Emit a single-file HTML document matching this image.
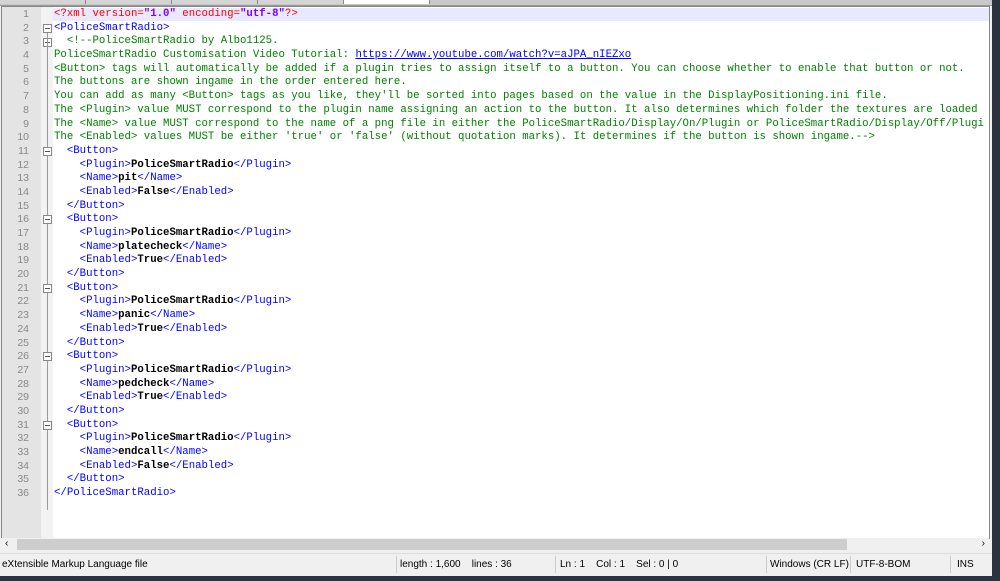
<!DOCTYPE html><html><head><style>
body{margin:0;width:1000px;height:581px;overflow:hidden;background:#2b3340;position:relative;font-family:"Liberation Mono",monospace}
.win{position:absolute;left:0;top:0;width:992px;height:576px;background:#f0f0f0}
.tabs{position:absolute;left:0;top:0;width:992px;height:5px;background:#c8c8c8;border-bottom:1px solid #999}
.tab{position:absolute;top:0;height:4px;background:#d4d4d4;border-right:1px solid #888}
.ed{position:absolute;left:1px;top:6px;width:987px;height:531px;background:#fff;border:1px solid #888;overflow:hidden}
.gut{position:absolute;left:0;top:0;width:39px;height:100%;background:#e4e4e4}
.fold{position:absolute;left:39px;top:0;width:12px;height:100%;background:#f2f2f2}
.hl{position:absolute;left:51px;top:1px;width:936px;height:13px;background:#e8e8ff}
.ln{position:absolute;left:0;width:27px;text-align:right;font-size:10.5px;color:#888;font-family:"Liberation Sans",sans-serif}
.code{position:absolute;left:52px;top:1px;font-size:10.7px;line-height:13.69px;white-space:pre;color:#000}
.t{color:#0000ff}.b{font-weight:bold}.c{color:#008000}.r{color:#ff0000}.v{color:#8000ff}.u{color:#0000ff;text-decoration:underline}
.sb{position:absolute;left:1px;top:538px;width:988px;height:13px;background:#f0f0f0}
.th{position:absolute;left:16px;top:1px;width:830px;height:11px;background:#cdcdcd}
.st{position:absolute;left:0;top:553px;width:992px;height:21px;background:#f0f0f0;font-family:"Liberation Sans",sans-serif;font-size:10px;color:#000;border-top:1px solid #ddd}
.st span{position:absolute;top:5px}
.sep{position:absolute;top:2px;width:1px;height:17px;background:#ccc}
.fb{position:absolute;left:41px;width:7px;height:7px;border:1px solid #888;background:#fff}
.fb:after{content:"";position:absolute;left:1px;top:3px;width:5px;height:1px;background:#555}
.vl{position:absolute;left:45px;width:1px;background:#999}
</style></head><body>
<div class="win">
<div class="tabs"><div class="tab" style="left:0;width:85px"></div><div class="tab" style="left:86px;width:85px"></div><div class="tab" style="left:172px;width:85px"></div><div class="tab" style="left:258px;width:85px"></div><div class="tab" style="left:344px;width:85px;background:#fff"></div></div>
<div class="ed">
<div class="gut"></div><div class="fold"></div><div class="hl"></div>
<div id="lns"></div>
<div class="fb" style="top:17px"></div><div class="fb" style="top:31px"></div>
<div class="vl" style="top:26px;height:477px"></div>
<div class="fb" style="top:140px"></div><div class="fb" style="top:208px"></div><div class="fb" style="top:277px"></div><div class="fb" style="top:345px"></div><div class="fb" style="top:414px"></div>
<div class="code"><span class="r">&lt;?xml version=</span><span class="v b">"1.0"</span><span class="r"> encoding=</span><span class="v b">"utf-8"</span><span class="r">?&gt;</span>
<span class="t">&lt;PoliceSmartRadio&gt;</span>
<span class="c">  &lt;!--PoliceSmartRadio by Albo1125.
PoliceSmartRadio Customisation Video Tutorial: </span><span class="u">https://www.youtube.com/watch?v=aJPA_nIEZxo</span><span class="c">
&lt;Button&gt; tags will automatically be added if a plugin tries to assign itself to a button. You can choose whether to enable that button or not.
The buttons are shown ingame in the order entered here.
You can add as many &lt;Button&gt; tags as you like, they'll be sorted into pages based on the value in the DisplayPositioning.ini file.
The &lt;Plugin&gt; value MUST correspond to the plugin name assigning an action to the button. It also determines which folder the textures are loaded
The &lt;Name&gt; value MUST correspond to the name of a png file in either the PoliceSmartRadio/Display/On/Plugin or PoliceSmartRadio/Display/Off/Plugi
The &lt;Enabled&gt; values MUST be either 'true' or 'false' (without quotation marks). It determines if the button is shown ingame.--&gt;</span>
<span class="t">  &lt;Button&gt;</span>
<span class="t">    &lt;Plugin&gt;</span><span class="b">PoliceSmartRadio</span><span class="t">&lt;/Plugin&gt;</span>
<span class="t">    &lt;Name&gt;</span><span class="b">pit</span><span class="t">&lt;/Name&gt;</span>
<span class="t">    &lt;Enabled&gt;</span><span class="b">False</span><span class="t">&lt;/Enabled&gt;</span>
<span class="t">  &lt;/Button&gt;</span>
<span class="t">  &lt;Button&gt;</span>
<span class="t">    &lt;Plugin&gt;</span><span class="b">PoliceSmartRadio</span><span class="t">&lt;/Plugin&gt;</span>
<span class="t">    &lt;Name&gt;</span><span class="b">platecheck</span><span class="t">&lt;/Name&gt;</span>
<span class="t">    &lt;Enabled&gt;</span><span class="b">True</span><span class="t">&lt;/Enabled&gt;</span>
<span class="t">  &lt;/Button&gt;</span>
<span class="t">  &lt;Button&gt;</span>
<span class="t">    &lt;Plugin&gt;</span><span class="b">PoliceSmartRadio</span><span class="t">&lt;/Plugin&gt;</span>
<span class="t">    &lt;Name&gt;</span><span class="b">panic</span><span class="t">&lt;/Name&gt;</span>
<span class="t">    &lt;Enabled&gt;</span><span class="b">True</span><span class="t">&lt;/Enabled&gt;</span>
<span class="t">  &lt;/Button&gt;</span>
<span class="t">  &lt;Button&gt;</span>
<span class="t">    &lt;Plugin&gt;</span><span class="b">PoliceSmartRadio</span><span class="t">&lt;/Plugin&gt;</span>
<span class="t">    &lt;Name&gt;</span><span class="b">pedcheck</span><span class="t">&lt;/Name&gt;</span>
<span class="t">    &lt;Enabled&gt;</span><span class="b">True</span><span class="t">&lt;/Enabled&gt;</span>
<span class="t">  &lt;/Button&gt;</span>
<span class="t">  &lt;Button&gt;</span>
<span class="t">    &lt;Plugin&gt;</span><span class="b">PoliceSmartRadio</span><span class="t">&lt;/Plugin&gt;</span>
<span class="t">    &lt;Name&gt;</span><span class="b">endcall</span><span class="t">&lt;/Name&gt;</span>
<span class="t">    &lt;Enabled&gt;</span><span class="b">False</span><span class="t">&lt;/Enabled&gt;</span>
<span class="t">  &lt;/Button&gt;</span>
<span class="t">&lt;/PoliceSmartRadio&gt;</span></div>
<div class="ln" style="top:1px;line-height:13.69px;white-space:pre">1
2
3
4
5
6
7
8
9
10
11
12
13
14
15
16
17
18
19
20
21
22
23
24
25
26
27
28
29
30
31
32
33
34
35
36</div>
</div>
<div class="sb"><div class="th"></div><span style="position:absolute;left:4px;top:0;font-size:10px;font-family:'Liberation Sans'">‹</span><span style="position:absolute;right:4px;top:0;font-size:10px;font-family:'Liberation Sans'">›</span></div>
<div class="st">
<span style="left:2px">eXtensible Markup Language file</span>
<div class="sep" style="left:396px"></div><span style="left:400px">length : 1,600&nbsp;&nbsp;&nbsp; lines : 36</span>
<div class="sep" style="left:555px"></div><span style="left:560px">Ln : 1&nbsp;&nbsp;&nbsp; Col : 1&nbsp;&nbsp;&nbsp; Sel : 0 | 0</span>
<div class="sep" style="left:766px"></div><span style="left:770px">Windows (CR LF)</span>
<div class="sep" style="left:850px"></div><span style="left:856px">UTF-8-BOM</span>
<div class="sep" style="left:950px"></div><span style="left:957px">INS</span>
</div>
</div>
</body></html>
